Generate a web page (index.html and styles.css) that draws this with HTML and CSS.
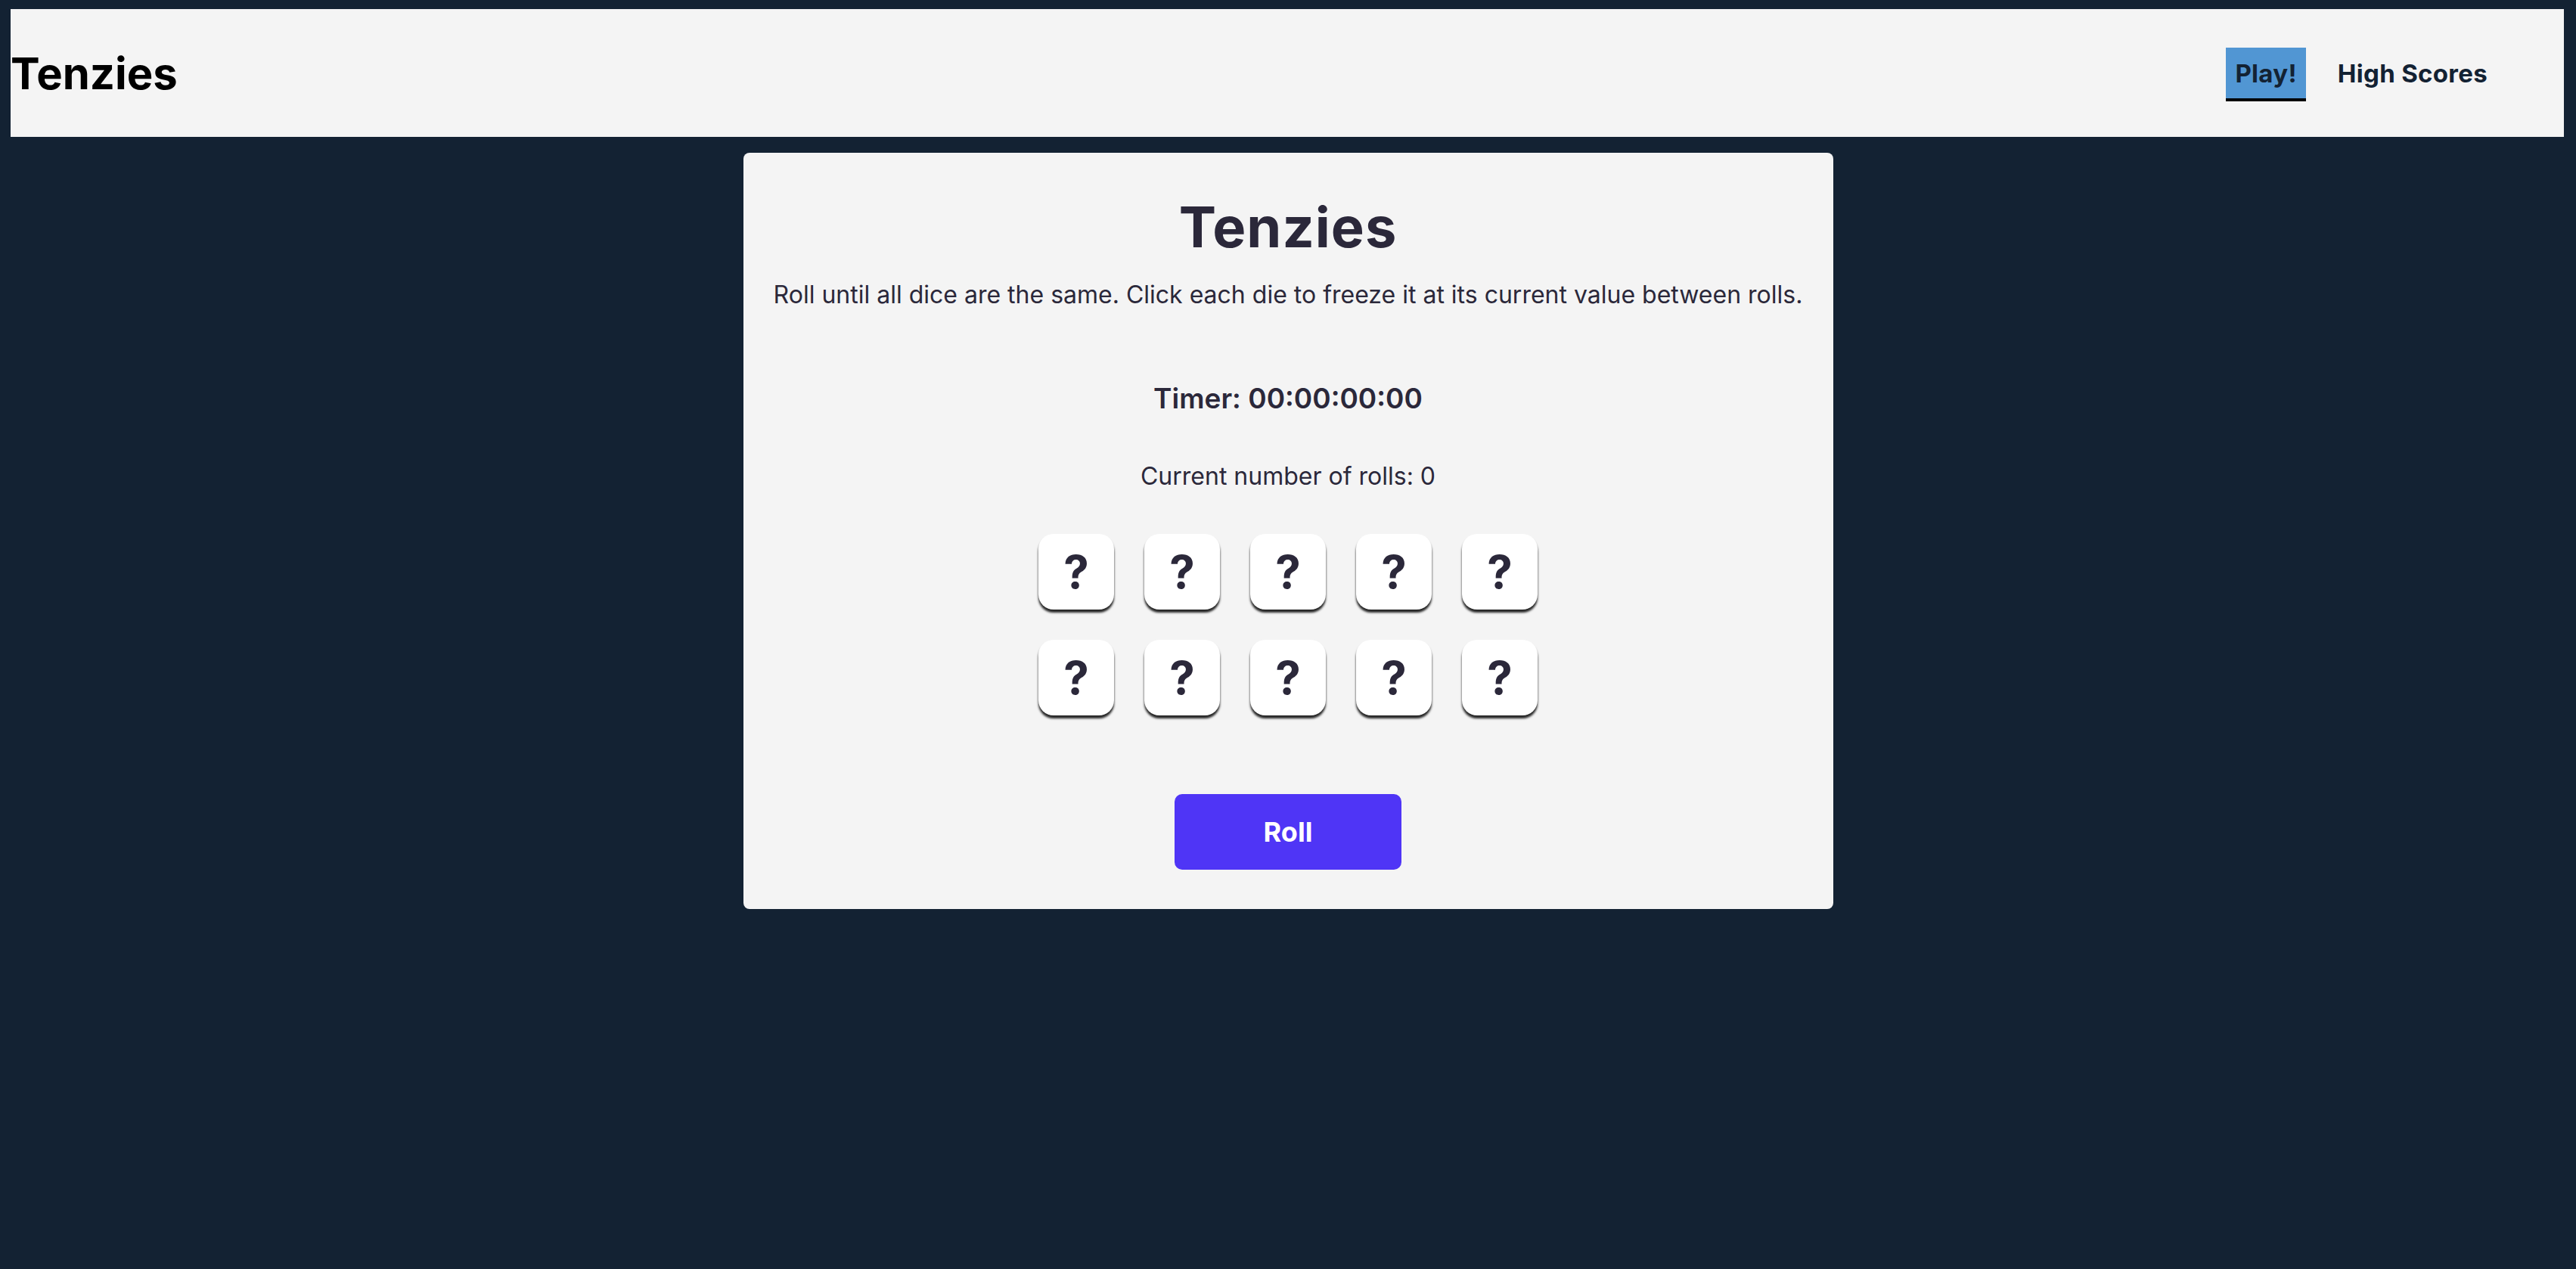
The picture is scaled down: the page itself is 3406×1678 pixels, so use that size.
FILE: index.html
```html
<!DOCTYPE html>
<html lang="en">
<head>
<meta charset="utf-8">
<title>Tenzies</title>
<link rel="stylesheet" href="styles.css">
</head>
<body>
<header class="topbar">
  <div class="brand">Tenzies</div>
  <nav class="nav">
    <a class="nav-link active" href="#">Play!</a>
    <a class="nav-link" href="#">High Scores</a>
  </nav>
</header>
<main class="card">
  <h1 class="title">Tenzies</h1>
  <p class="instructions">Roll until all dice are the same. Click each die to freeze it at its current value between rolls.</p>
  <p class="timer">Timer: 00:00:00:00</p>
  <p class="rolls">Current number of rolls: 0</p>
  <div class="dice">
    <div class="die">?</div>
    <div class="die">?</div>
    <div class="die">?</div>
    <div class="die">?</div>
    <div class="die">?</div>
    <div class="die">?</div>
    <div class="die">?</div>
    <div class="die">?</div>
    <div class="die">?</div>
    <div class="die">?</div>
  </div>
  <button class="roll-btn">Roll</button>
</main>
</body>
</html>
```
FILE: styles.css
```css
* { box-sizing: border-box; }

html, body {
  margin: 0;
  padding: 0;
  background: #132233;
  font-family: Inter, "Noto Sans", sans-serif;
}

body {
  min-height: 1678px;
}

.topbar {
  margin: 12px 16px 0 14px;
  height: 169px;
  background: #f4f4f4;
  display: flex;
  align-items: center;
  justify-content: space-between;
}

.brand {
  font-size: 58px;
  font-weight: 700;
  color: #000;
  line-height: 73px;
  padding-top: 2px;
}

.nav {
  display: flex;
  align-items: center;
  gap: 30px;
  padding-right: 89px;
  padding-top: 4px;
}

.nav-link {
  display: block;
  font-size: 33px;
  font-weight: 700;
  line-height: 40px;
  color: #132233;
  text-decoration: none;
  padding: 13.5px 12px;
  border-bottom: 4px solid transparent;
  letter-spacing: 0.3px;
}

.nav-link.active {
  background: #5196d3;
  border-bottom-color: #000;
}

.card {
  width: 1441px;
  margin: 21px auto 0;
  background: #f4f4f4;
  border-radius: 8px;
  padding: 53px 20px 52px;
  display: flex;
  flex-direction: column;
  align-items: center;
  color: #2b283a;
}

.title {
  margin: 0;
  font-size: 74px;
  line-height: 90px;
  font-weight: 700;
  letter-spacing: 1px;
}

.instructions {
  margin: 25px 0 0;
  font-size: 32px;
  line-height: 40px;
  font-weight: 400;
}

.timer {
  margin: 95px 0 0;
  font-size: 37px;
  line-height: 44px;
  font-weight: 600;
}

.rolls {
  margin: 61px 0 0;
  font-size: 32px;
  line-height: 40px;
  font-weight: 400;
}

.dice {
  margin-top: 56px;
  display: grid;
  grid-template-columns: repeat(5, 100px);
  gap: 40px;
}

.die {
  width: 100px;
  height: 100px;
  background: #fff;
  border-radius: 20px;
  box-shadow: 0 4px 3px rgba(0, 0, 0, 0.85);
  display: flex;
  align-items: center;
  justify-content: center;
  font-size: 60px;
  font-weight: 700;
  color: #2b283a;
  line-height: 1;
}

.roll-btn {
  margin-top: 104px;
  width: 300px;
  height: 100px;
  border: none;
  border-radius: 10px;
  background: #4f35f6;
  color: #fff;
  font-family: Inter, "Noto Sans", sans-serif;
  font-size: 36px;
  font-weight: 700;
  cursor: pointer;
}
```
